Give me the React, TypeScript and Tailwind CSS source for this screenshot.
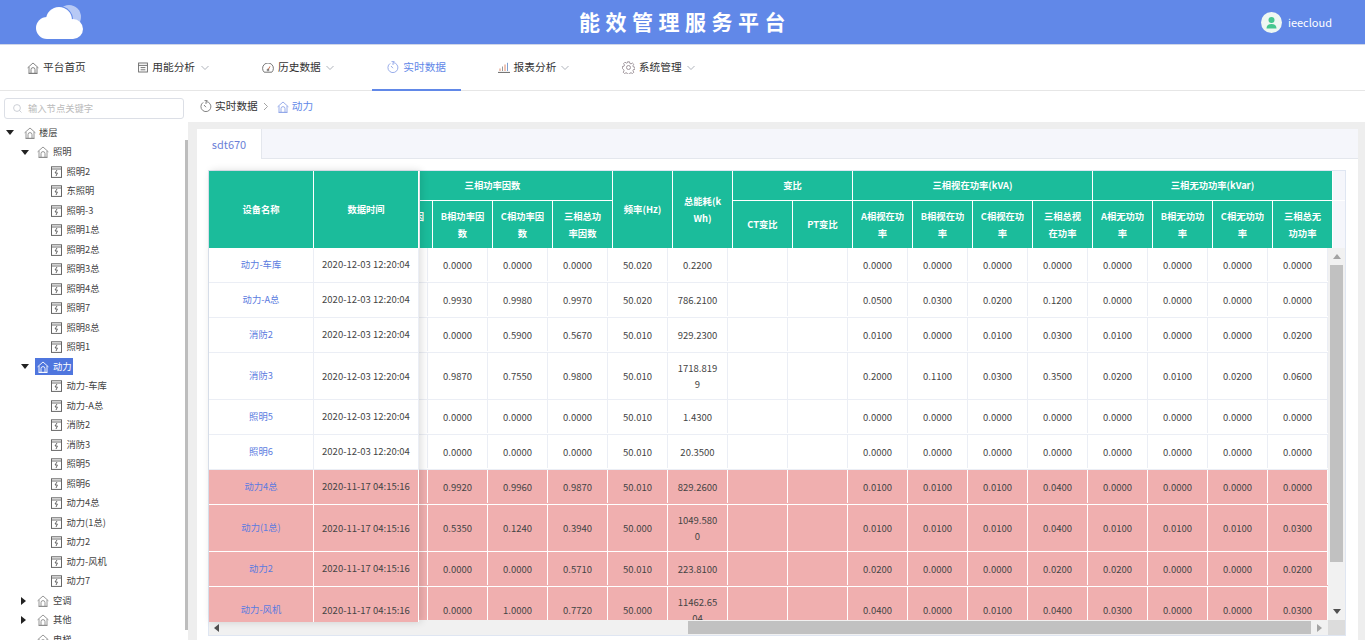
import React from "react";

const Home = ({ c = "#7a7a7a", s = 12 }: { c?: string; s?: number }) => (
  <svg width={s} height={s} viewBox="0 0 12 12" fill="none" stroke={c} strokeWidth="0.9" className="shrink-0">
    <path d="M0.6 5.8 6 1l5.4 4.8" />
    <path d="M2 5v6.4h8V5" />
    <path d="M4 11.4V7.6a2 2 0 0 1 4 0v3.8" />
    <path d="M1.5 11.4h9" />
  </svg>
);
const Device = () => (
  <svg width="11" height="12" viewBox="0 0 11 12" fill="none" className="shrink-0">
    <rect x="0.5" y="0.8" width="10" height="10.6" stroke="#666" strokeWidth="1" />
    <path d="M1 3h9" stroke="#999" strokeWidth="1.4" />
    <path d="M6 4 4 7h2.4L5 10" stroke="#555" strokeWidth="0.9" />
  </svg>
);
const Clock = ({ c }: { c: string }) => (
  <svg width="12" height="13" viewBox="0 0 12 13" fill="none" stroke={c} strokeWidth="0.9" className="shrink-0">
    <path d="M3.2 2.4A5 5 0 1 0 6 1.6V4" />
    <path d="M6 7.2 4 5" />
    <path d="M4.5 .6h3" />
  </svg>
);
const Chev = () => (
  <svg width="10" height="6" viewBox="0 0 10 6" fill="none" stroke="#9aa0aa" strokeWidth="0.8" className="shrink-0">
    <path d="M1.5 1 5 4.5 8.5 1" />
  </svg>
);

const NavCal = () => (
  <svg width="10" height="11" viewBox="0 0 10 11" fill="none" stroke="#666" strokeWidth="0.9" className="shrink-0">
    <rect x="0.6" y="1" width="8.8" height="9" />
    <path d="M.6 3.4h8.8M2.6 5.6h4.8M2.6 7.8h4.8" />
  </svg>
);
const NavGauge = () => (
  <svg width="12" height="10" viewBox="0 0 12 10" fill="none" stroke="#666" strokeWidth="0.9" className="shrink-0">
    <path d="M2.2 9.2A5.4 5.4 0 1 1 9.8 9.2Z" />
    <path d="M6 7 8 3.4" stroke="#c4603a" />
    <circle cx="6" cy="7" r="0.9" />
  </svg>
);
const NavBars = () => (
  <svg width="12" height="11" viewBox="0 0 12 11" fill="none" strokeWidth="1" className="shrink-0">
    <path d="M2 9V6.5" stroke="#e08a6a" />
    <path d="M4.5 9V4.5" stroke="#999" />
    <path d="M7 9V2.5" stroke="#e08a6a" />
    <path d="M9.5 9V.8" stroke="#7f9fd0" />
    <path d="M0 10.4h12" stroke="#666" />
  </svg>
);
const NavGear = () => (
  <svg width="13" height="13" viewBox="0 0 13 13" fill="none" stroke="#8a7f86" strokeWidth="0.8" className="shrink-0">
    <circle cx="6.5" cy="6.5" r="2" />
    <path d="M5.5.8h2l.3 1.6 1.2.5 1.4-.9 1.4 1.4-.9 1.4.5 1.2 1.6.3v2l-1.6.3-.5 1.2.9 1.4-1.4 1.4-1.4-.9-1.2.5-.3 1.1h-2l-.3-1.1-1.2-.5-1.4.9-1.4-1.4.9-1.4-.5-1.2L.4 7.5v-2L2 5.2l.5-1.2-.9-1.4L3 1.2l1.4.9 1.2-.5z" />
  </svg>
);

const Down = () => (
  <svg width="8" height="5" viewBox="0 0 8 5" className="shrink-0"><path d="M0 0h8L4 5z" fill="#222" /></svg>
);
const Right = () => (
  <svg width="5" height="8" viewBox="0 0 5 8" className="shrink-0"><path d="M0 0v8l5-4z" fill="#222" /></svg>
);

type T = { l: string; lv: 0 | 1 | 2; a?: "d" | "r"; sel?: boolean };
const tree: T[] = [
  { l: "楼层", lv: 0, a: "d" },
  { l: "照明", lv: 1, a: "d" },
  ...["照明2", "东照明", "照明-3", "照明1总", "照明2总", "照明3总", "照明4总", "照明7", "照明8总", "照明1"].map((l) => ({ l, lv: 2 as const })),
  { l: "动力", lv: 1, a: "d", sel: true },
  ...["动力-车库", "动力-A总", "消防2", "消防3", "照明5", "照明6", "动力4总", "动力(1总)", "动力2", "动力-风机", "动力7"].map((l) => ({ l, lv: 2 as const })),
  { l: "空调", lv: 1, a: "r" },
  { l: "其他", lv: 1, a: "r" },
  { l: "电梯", lv: 1 },
];

const Z = "0.0000";
type R = { n: string; t: string; h?: boolean; p?: boolean; v: string[] };
const T1 = "2020-12-03 12:20:04";
const T2 = "2020-11-17 04:15:16";
const rows: R[] = [
  { n: "动力-车库", t: T1, v: [Z, Z, Z, "50.020", "0.2200", "", "", Z, Z, Z, Z, Z, Z, Z, Z] },
  { n: "动力-A总", t: T1, v: ["0.9930", "0.9980", "0.9970", "50.020", "786.2100", "", "", "0.0500", "0.0300", "0.0200", "0.1200", Z, Z, Z, Z] },
  { n: "消防2", t: T1, v: [Z, "0.5900", "0.5670", "50.010", "929.2300", "", "", "0.0100", Z, "0.0100", "0.0300", "0.0100", Z, Z, "0.0200"] },
  { n: "消防3", t: T1, h: true, v: ["0.9870", "0.7550", "0.9800", "50.010", "1718.819\n9", "", "", "0.2000", "0.1100", "0.0300", "0.3500", "0.0200", "0.0100", "0.0200", "0.0600"] },
  { n: "照明5", t: T1, v: [Z, Z, Z, "50.010", "1.4300", "", "", Z, Z, Z, Z, Z, Z, Z, Z] },
  { n: "照明6", t: T1, v: [Z, Z, Z, "50.010", "20.3500", "", "", Z, Z, Z, Z, Z, Z, Z, Z] },
  { n: "动力4总", t: T2, p: true, v: ["0.9920", "0.9960", "0.9870", "50.010", "829.2600", "", "", "0.0100", "0.0100", "0.0100", "0.0400", Z, Z, Z, Z] },
  { n: "动力(1总)", t: T2, p: true, h: true, v: ["0.5350", "0.1240", "0.3940", "50.000", "1049.580\n0", "", "", "0.0100", "0.0100", "0.0100", "0.0400", "0.0100", "0.0100", "0.0100", "0.0300"] },
  { n: "动力2", t: T2, p: true, v: [Z, Z, "0.5710", "50.010", "223.8100", "", "", "0.0200", Z, Z, "0.0200", "0.0200", Z, Z, "0.0200"] },
  { n: "动力-风机", t: T2, p: true, h: true, v: [Z, "1.0000", "0.7720", "50.000", "11462.65\n04", "", "", "0.0400", Z, "0.0100", "0.0400", "0.0300", Z, Z, "0.0300"] },
];

const HCell = ({ t, w = "w-[60px]" }: { t: string; w?: string }) => (
  <div className={`${w} h-full shrink-0 border-r border-white flex items-center justify-center text-center whitespace-pre-line leading-[17px]`}>{t}</div>
);

const Group = ({ title, cells, w = "w-[240px]", clip }: { title: string; cells: string[]; w?: string; clip?: boolean }) => (
  <div className={`${clip ? "w-[193px]" : w} shrink-0 h-full overflow-hidden`}>
    <div className={`${w} h-full flex flex-col ${clip ? "-ml-[47px]" : ""}`}>
      <div className="h-[30px] shrink-0 border-b border-r border-white flex items-center justify-center">{title}</div>
      <div className="flex-1 flex">
        {cells.map((c, i) => (
          <HCell key={i} t={c} />
        ))}
      </div>
    </div>
  </div>
);

const VArrow = ({ up }: { up?: boolean }) => (
  <div className="h-[17px] shrink-0 flex items-center justify-center">
    <svg width="8" height="5" viewBox="0 0 8 5">
      <path d={up ? "M4 0l4 5H0z" : "M0 0h8L4 5z"} fill={up ? "#a3a3a3" : "#505050"} />
    </svg>
  </div>
);

export default function App() {
  return (
    <div className="w-[1365px] h-[640px] overflow-hidden flex flex-col bg-white font-['Noto_Sans_CJK_SC','Noto_Sans',sans-serif] text-[9.3px] text-[#444]">
      {/* header */}
      <header className="h-[45px] shrink-0 bg-[#6188e8] border-b border-[#cfd6e8] flex items-center justify-between pl-[35px] pr-[33px] relative">
        <svg width="50" height="36" viewBox="0 0 50 36" className="shrink-0">
          <circle cx="34" cy="13" r="12" fill="#ffffff" opacity="0.55" />
          <circle cx="24" cy="16" r="14" fill="#6188e8" />
          <circle cx="12" cy="24" r="11" fill="#fff" />
          <circle cx="24" cy="16" r="13" fill="#fff" />
          <circle cx="38" cy="25" r="10" fill="#fff" />
          <rect x="12" y="20" width="26" height="15" fill="#fff" />
        </svg>
        <div className="absolute left-[579px] top-[3px] text-[21px] leading-[36px] font-bold text-white tracking-[5.5px] whitespace-nowrap">能效管理服务平台</div>
        <div className="flex items-center gap-[6px]">
          <div className="w-[21px] h-[21px] rounded-full bg-[#eef7f2] flex items-center justify-center">
            <svg width="13" height="13" viewBox="0 0 13 13">
              <circle cx="6.5" cy="4" r="3" fill="#45c78f" />
              <path d="M1.5 12.4c0-3 2-4.4 5-4.4s5 1.4 5 4.4z" fill="#45c78f" />
            </svg>
          </div>
          <span className="text-[11px] text-white">ieecloud</span>
        </div>
      </header>

      {/* nav */}
      <nav className="h-[46px] shrink-0 border-b border-[#e6e6e6] flex pl-[12px] gap-[22px] text-[10.7px] text-[#333]">
        <div className="flex items-center gap-[4px] px-[15px]"><Home c="#777" /><span>平台首页</span></div>
        <div className="flex items-center gap-[4.5px] px-[15px]"><NavCal /><span>用能分析</span><Chev /></div>
        <div className="flex items-center gap-[4.5px] px-[15px]"><NavGauge /><span>历史数据</span><Chev /></div>
        <div className="flex items-center gap-[4px] px-[15px] border-b-2 border-[#6188e8] text-[#6188e8] mb-[-1px]"><Clock c="#8fa5e8" /><span>实时数据</span></div>
        <div className="flex items-center gap-[3.5px] px-[15px]"><NavBars /><span>报表分析</span><Chev /></div>
        <div className="flex items-center gap-[4px] px-[15px]"><NavGear /><span>系统管理</span><Chev /></div>
      </nav>

      <div className="flex-1 min-h-0 flex">
        {/* sidebar */}
        <aside className="w-[188px] shrink-0 relative overflow-hidden">
          <div className="mt-[7px] ml-[4px] w-[180px] h-[21px] border border-[#dcdfe6] rounded-[3px] flex items-center pl-[8px] gap-[6px] text-[#bbb]">
            <svg width="9" height="9" viewBox="0 0 9 9" fill="none" stroke="#c0c4cc" strokeWidth="0.8" className="shrink-0">
              <circle cx="4" cy="4" r="3.4" /><path d="M6.5 6.5 8.5 8.5" />
            </svg>
            <span>输入节点关键字</span>
          </div>
          <div className="mt-[4px] w-[184px]">
            {tree.map((n, i) => (
              <div
                key={i}
                className={`h-[19.5px] flex items-center ${n.lv === 0 ? "pl-[6px]" : n.lv === 1 ? "pl-[21px]" : "pl-[51px]"}`}
              >
                {n.lv !== 2 && (
                  <span className={`flex items-center shrink-0 ${n.lv === 0 ? "w-[18px]" : "w-[14px]"}`}>
                    {n.a === "d" ? <Down /> : n.a === "r" ? <Right /> : null}
                  </span>
                )}
                <span className={`flex items-center h-[17px] ${n.lv === 1 ? "gap-[4px]" : n.lv === 0 ? "gap-[3px]" : "gap-[4.5px]"} ${n.sel ? "bg-[#4f76de] text-white pl-[2px] w-[38px]" : n.lv === 1 ? "pl-[2px]" : ""}`}>
                  {n.lv === 2 ? <Device /> : <Home c={n.sel ? "#fff" : "#8a8a8a"} />}
                  <span>{n.l}</span>
                </span>
              </div>
            ))}
          </div>
          <div className="absolute right-0 top-[49px] w-[3px] h-[490px] bg-[#bdbdbd]" />
        </aside>

        {/* main */}
        <main className="flex-1 min-w-0 flex flex-col">
          <div className="h-[31px] shrink-0 flex items-center pl-[12px] text-[10.7px] text-[#333]">
            <Clock c="#777" />
            <span className="ml-[3px]">实时数据</span>
            <svg width="6" height="9" viewBox="0 0 6 9" fill="none" stroke="#9a9a9a" strokeWidth="0.9" className="ml-[5px] mr-[8px]"><path d="M1 1l3.5 3.5L1 8" /></svg>
            <Home c="#8fa5e8" />
            <span className="ml-[3px] text-[#6188e8]">动力</span>
          </div>

          <div className="flex-1 min-h-0 bg-[#eeeeee] pt-[7px] pl-[9px] pr-[7px]">
            <div className="h-full bg-white flex flex-col">
              <div className="h-[30px] shrink-0 bg-[#f5f6fb] border-b border-[#e4e7ed] flex">
                <div className="w-[65px] h-[30px] bg-white border-r border-[#e4e7ed] flex items-center justify-center text-[11px] text-[#6b7fd7]">sdt670</div>
              </div>

              {/* table */}
              <div className="mt-[11px] ml-[11px] w-[1138px] h-[466px] border border-[#dfe6f2] relative shrink-0 flex flex-col">
                {/* scrolling head */}
                <div className="h-[77px] shrink-0 flex pl-[211px] bg-[#f5f6fb]">
                  <div className="flex h-[77px] bg-[#1bbc9b] text-white font-bold">
                    <Group clip title="三相功率因数" cells={["A相功率因\n数", "B相功率因\n数", "C相功率因\n数", "三相总功\n率因数"]} />
                    <HCell t="频率(Hz)" />
                    <HCell t={"总能耗(k\nWh)"} />
                    <Group w="w-[120px]" title="变比" cells={["CT变比", "PT变比"]} />
                    <Group title="三相视在功率(kVA)" cells={["A相视在功\n率", "B相视在功\n率", "C相视在功\n率", "三相总视\n在功率"]} />
                    <Group title="三相无功功率(kVar)" cells={["A相无功功\n率", "B相无功功\n率", "C相无功功\n率", "三相总无\n功功率"]} />
                  </div>
                  <div className="flex-1 h-[30px] border-b border-white" />
                </div>

                {/* scrolling body */}
                <div className="h-[372px] shrink-0 flex">
                  <div className="flex-1 min-w-0 overflow-hidden text-[9.5px]">
                    {rows.map((r, i) => (
                      <div key={i} className={`${r.h ? "h-[47px]" : "h-[35px] pb-px"} flex border-b ${r.p ? "bg-[#f0afaf] border-white" : "border-[#ebeef5]"}`}>
                        <div className={`w-[219px] shrink-0 border-r ${r.p ? "border-white" : "border-[#ebeef5]"}`} />
                        {r.v.map((v, j) => (
                          <div key={j} className={`w-[60px] shrink-0 border-r ${r.p ? "border-white" : "border-[#ebeef5]"} flex items-center justify-center text-center whitespace-pre-line leading-[16px]`}>{v}</div>
                        ))}
                      </div>
                    ))}
                  </div>
                  <div className="w-[17px] shrink-0 bg-[#f1f1f1] flex flex-col">
                    <VArrow up />
                    <div className="h-[297px] mx-[2px] bg-[#c1c1c1]" />
                    <div className="flex-1" />
                    <VArrow />
                  </div>
                </div>

                {/* horizontal scrollbar */}
                <div className="h-[15px] shrink-0 bg-[#f1f1f1] flex items-center">
                  <div className="w-[15px] flex justify-center"><svg width="5" height="8" viewBox="0 0 5 8"><path d="M5 0v8L0 4z" fill="#505050" /></svg></div>
                  <div className="w-[464px]" />
                  <div className="w-[623px] h-[13px] bg-[#c1c1c1]" />
                  <div className="flex-1 flex justify-center"><svg width="5" height="8" viewBox="0 0 5 8"><path d="M0 0v8l5-4z" fill="#a3a3a3" /></svg></div>
                  <div className="w-[17px] h-[15px] bg-[#dcdcdc]" />
                </div>

                {/* fixed columns overlay */}
                <div className="absolute left-0 top-0 w-[210px] h-[451px] bg-white overflow-hidden shadow-[2px_0_8px_rgba(0,0,0,0.14)]">
                  <div className="h-[77px] flex bg-[#1bbc9b] text-white font-bold">
                    <HCell w="w-[105px]" t="设备名称" />
                    <HCell w="w-[105px]" t="数据时间" />
                  </div>
                  {rows.map((r, i) => (
                    <div key={i} className={`${r.h ? "h-[47px]" : "h-[35px]"} flex border-b ${r.p ? "bg-[#f0afaf] border-white" : "border-[#ebeef5]"}`}>
                      <div className={`w-[105px] shrink-0 border-r ${r.p ? "border-white" : "border-[#ebeef5]"} flex items-center justify-center text-[#5b7be0]`}>{r.n}</div>
                      <div className={`w-[105px] shrink-0 border-r ${r.p ? "border-white" : "border-[#ebeef5]"} flex items-center justify-center text-[#444] text-[9.5px] whitespace-nowrap ${r.h ? "" : "pb-px"}`}>{r.t}</div>
                    </div>
                  ))}
                </div>
              </div>
            </div>
          </div>
        </main>
      </div>
    </div>
  );
}
